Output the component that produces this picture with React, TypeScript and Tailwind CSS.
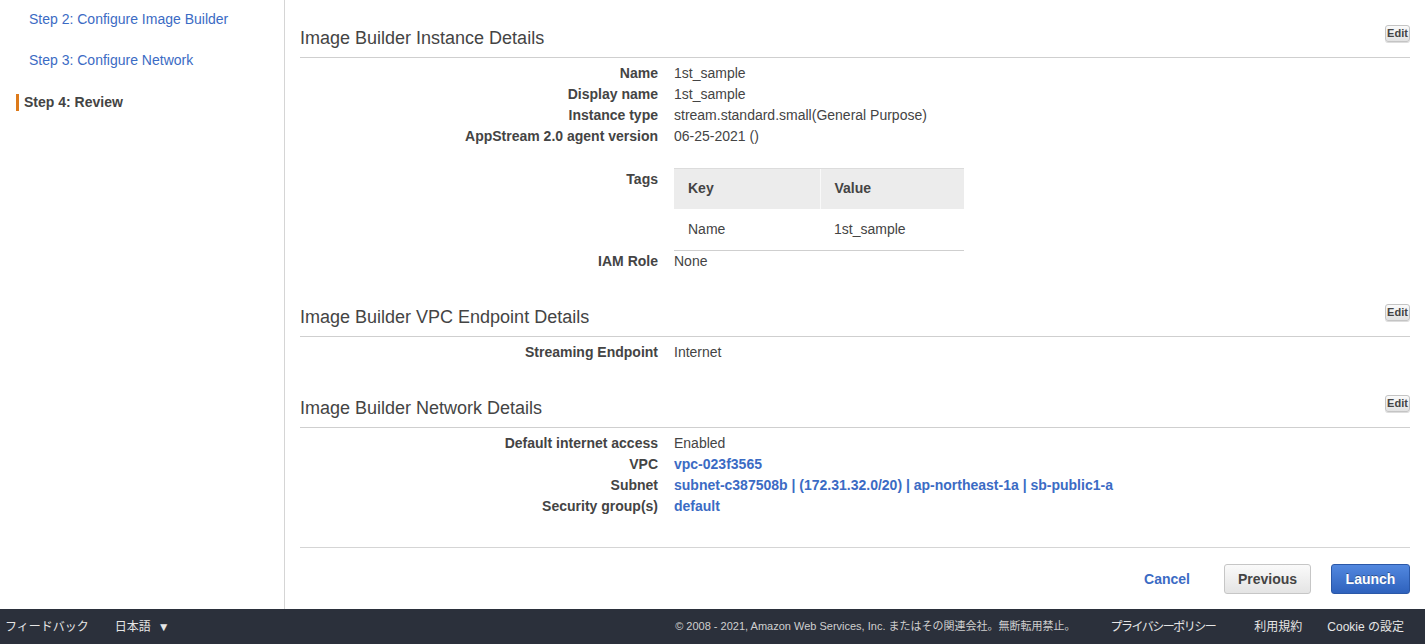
import React from 'react';

type Row = { label: string; value: React.ReactNode };

const FONT = "font-['Liberation_Sans',Arial,'Noto_Sans_CJK_JP',sans-serif]";

function EditButton() {
  return (
    <button className="h-[17px] w-[25px] rounded-[3px] border border-[#c4c4c4] bg-gradient-to-b from-[#fafafa] to-[#e2e2e2] text-[11px] leading-[15px] font-bold text-[#444] shadow-[0_1px_0_#ddd]">
      Edit
    </button>
  );
}

function SectionHeader({ title }: { title: string }) {
  return (
    <div className="flex h-[33px] items-start justify-between border-b border-[#cfcfcf]">
      <h2 className="mt-[2px] text-[18px] leading-[22px] text-[#444]">{title}</h2>
      <EditButton />
    </div>
  );
}

function DetailRows({ rows }: { rows: Row[] }) {
  return (
    <div>
      {rows.map((row) => (
        <div key={row.label} className="grid grid-cols-[358px_1fr] gap-x-4 text-[14px] leading-[21px]">
          <div className="text-right font-bold text-[#444]">{row.label}</div>
          <div className="text-[#444]">{row.value}</div>
        </div>
      ))}
    </div>
  );
}

function Link({ children }: { children: React.ReactNode }) {
  return <span className="font-bold text-[#3b6bc4]">{children}</span>;
}

export default function App() {
  return (
    <div className={`flex min-h-screen flex-col bg-white ${FONT}`}>
      <div className="flex flex-1">
        {/* Wizard steps */}
        <div className="w-[285px] shrink-0 border-r border-[#d5d5d5]">
          <div className="pt-[9px] pl-[29px] text-[14px] leading-[20px] text-[#3b6bc4]">
            Step 2: Configure Image Builder
          </div>
          <div className="mt-[21px] pl-[29px] text-[14px] leading-[20px] text-[#3b6bc4]">
            Step 3: Configure Network
          </div>
          <div className="mt-[24px] ml-4 border-l-[3px] border-[#dd7a1a] pl-[5px] text-[14px] leading-[17px] font-bold text-[#444]">
            Step 4: Review
          </div>
        </div>

        {/* Review content */}
        <div className="flex-1 px-[15px] pt-[25px]">
          <SectionHeader title="Image Builder Instance Details" />
          <div className="mt-[5px]">
            <DetailRows
              rows={[
                { label: 'Name', value: '1st_sample' },
                { label: 'Display name', value: '1st_sample' },
                { label: 'Instance type', value: 'stream.standard.small(General Purpose)' },
                { label: 'AppStream 2.0 agent version', value: '06-25-2021 ()' },
              ]}
            />
            <div className="mt-[21px] grid grid-cols-[358px_1fr] gap-x-4 text-[14px]">
              <div className="pt-[1px] text-right leading-[21px] font-bold text-[#444]">Tags</div>
              <table className="w-[290px] border-collapse text-left text-[#444]">
                <thead>
                  <tr className="h-[40px] bg-[#ececec]">
                    <th className="w-[146px] border-t border-[#dcdcdc] pl-[14px] font-bold">Key</th>
                    <th className="border-t border-l border-[#dcdcdc] border-l-[#f9f9f9] pl-[14px] font-bold">
                      Value
                    </th>
                  </tr>
                </thead>
                <tbody>
                  <tr className="h-[42px] border-b border-[#cfcfcf]">
                    <td className="pl-[14px]">Name</td>
                    <td className="pl-[14px]">1st_sample</td>
                  </tr>
                </tbody>
              </table>
            </div>
            <DetailRows rows={[{ label: 'IAM Role', value: 'None' }]} />
          </div>

          <div className="mt-[32px]">
            <SectionHeader title="Image Builder VPC Endpoint Details" />
            <div className="mt-[5px]">
              <DetailRows rows={[{ label: 'Streaming Endpoint', value: 'Internet' }]} />
            </div>
          </div>

          <div className="mt-[32px]">
            <SectionHeader title="Image Builder Network Details" />
            <div className="mt-[5px]">
              <DetailRows
                rows={[
                  { label: 'Default internet access', value: 'Enabled' },
                  { label: 'VPC', value: <Link>vpc-023f3565</Link> },
                  {
                    label: 'Subnet',
                    value: <Link>subnet-c387508b | (172.31.32.0/20) | ap-northeast-1a | sb-public1-a</Link>,
                  },
                  { label: 'Security group(s)', value: <Link>default</Link> },
                ]}
              />
            </div>
          </div>

          <div className="mt-[30px] flex items-center justify-end border-t border-[#d5d5d5] pt-[16px] pb-[15px]">
            <button className="mr-[34px] text-[14px] font-bold text-[#3b6bc4]">Cancel</button>
            <button className="h-[30px] w-[87px] rounded-[3px] border border-[#c6c6c6] bg-gradient-to-b from-[#fafafa] to-[#e4e4e4] text-[14px] font-bold text-[#444]">
              Previous
            </button>
            <button className="ml-[20px] h-[30px] w-[79px] rounded-[3px] border border-[#2b58a8] bg-gradient-to-b from-[#5288df] to-[#2f62bd] text-[14px] font-bold text-white [text-shadow:0_-1px_0_rgba(0,0,0,0.35)]">
              Launch
            </button>
          </div>
        </div>
      </div>

      {/* Footer */}
      <div className="flex h-[35px] items-center bg-[#2b303b] text-[12px] text-[#e6e6e6]">
        <span className="ml-[5px]">フィードバック</span>
        <span className="ml-[26px] flex items-center gap-[7px]">
          日本語
          <span className="text-[12px]">▼</span>
        </span>
        <span className="ml-auto text-[11px] text-[#cfcfcf]">
          © 2008 - 2021, Amazon Web Services, Inc. またはその関連会社。無断転用禁止。
        </span>
        <span className="ml-[35px] tracking-[-1.5px]">プライバシーポリシー</span>
        <span className="ml-[39px]">利用規約</span>
        <span className="mr-[21px] ml-[25px]">Cookie の設定</span>
      </div>
    </div>
  );
}
